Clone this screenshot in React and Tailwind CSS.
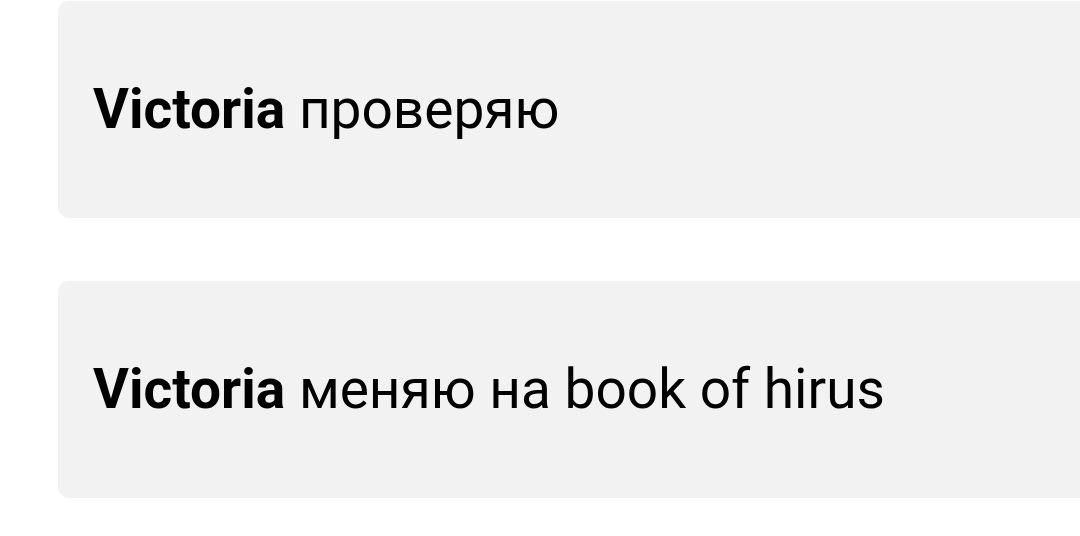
const messages = [
  { name: "Victoria", text: "проверяю" },
  { name: "Victoria", text: "меняю на book of hirus" },
];

const App = () => {
  return (
    <div
      className="w-[1080px] h-[536px] overflow-hidden bg-white pt-px pl-[58px] flex flex-col gap-[63px]"
      style={{ fontFamily: "Roboto, 'Noto Sans', sans-serif" }}
    >
      {messages.map((m, i) => (
        <div
          key={i}
          className="-mr-6 h-[217px] rounded-[11px] bg-[#f2f2f2] flex items-center pl-[35px]"
        >
          <p className="text-[55px] leading-none text-black whitespace-nowrap">
            <span className="font-bold">{m.name}</span> {m.text}
          </p>
        </div>
      ))}
    </div>
  );
};

export default App;
